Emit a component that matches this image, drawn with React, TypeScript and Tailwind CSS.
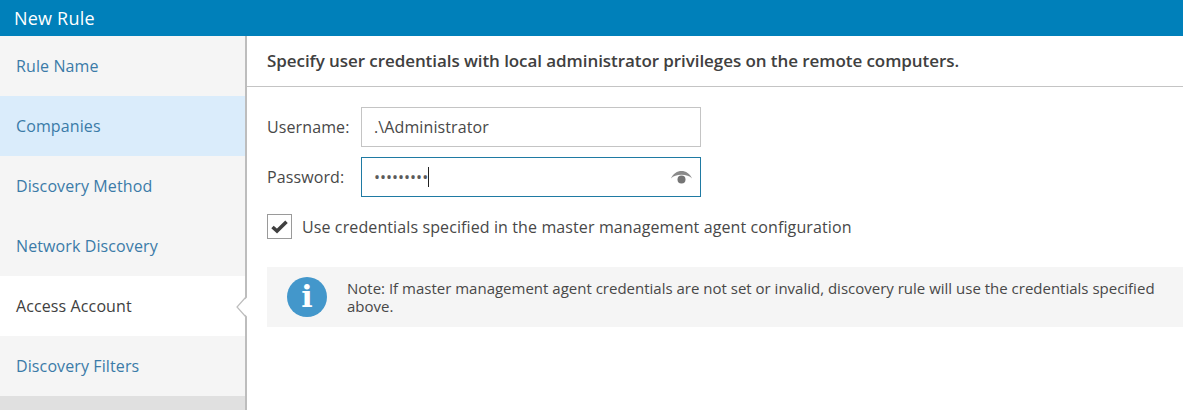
import React from "react";

const steps = [
  { label: "Rule Name", cls: "bg-[#f5f5f5] text-[#3b7ba8]" },
  { label: "Companies", cls: "bg-[#daecfb] text-[#3b7ba8]" },
  { label: "Discovery Method", cls: "bg-[#f5f5f5] text-[#3b7ba8]" },
  { label: "Network Discovery", cls: "bg-[#f5f5f5] text-[#3b7ba8]" },
  { label: "Access Account", cls: "bg-white text-[#404040]", active: true },
  { label: "Discovery Filters", cls: "bg-[#f5f5f5] text-[#3b7ba8]" },
];

const App = () => {
  return (
    <div className="h-[410px] w-[1183px] overflow-hidden bg-white font-['Open_Sans',sans-serif] text-[16px] tracking-[0.11px] text-[#484848]">
      {/* Title bar */}
      <div className="flex h-[36px] items-center bg-[#0080ba] pl-[14px] text-[18px] tracking-[0.2px] text-white">New Rule</div>

      <div className="flex h-[374px]">
        {/* Steps */}
        <div className="flex w-[247px] shrink-0 flex-col border-r-2 border-[#bdbdbd] bg-[#e0e0e0]">
          {steps.map((s) => (
            <div key={s.label} className={`relative flex h-[60px] shrink-0 items-center pl-[16px] ${s.cls}`}>
              {s.label}
              {s.active && (
                <svg className="absolute right-[-2px] top-[21px]" width="11" height="20" viewBox="0 0 11 20">
                  <path d="M11 0.5 L1 10 L11 19.5 Z" fill="#ffffff" />
                  <path d="M9.5 0.5 L1 10 L9.5 19.5" fill="none" stroke="#bdbdbd" strokeWidth="1.2" />
                </svg>
              )}
            </div>
          ))}
        </div>

        {/* Content */}
        <div className="min-w-0 flex-1">
          <div className="flex h-[51px] items-center border-b border-[#c4c4c4] pb-[1px] pl-[20px] text-[17px] font-semibold tracking-[-0.07px] text-[#404040]">
            Specify user credentials with local administrator privileges on the remote computers.
          </div>

          <div className="pl-[20px] pt-[20px]">
            <div className="flex items-center">
              <label className="w-[94px]">Username:</label>
              <div className="flex h-[40px] w-[340px] items-center border border-[#c4c4c4] pl-[12px]">.\Administrator</div>
            </div>
            <div className="mt-[10px] flex items-center">
              <label className="w-[94px]">Password:</label>
              <div className="flex h-[40px] w-[340px] items-center border border-[#1f7aa3] pl-[12px]">
                <span className="tracking-normal text-[#5a5a5a]">•••••••••</span>
                <span className="h-[20px] w-[1px] bg-[#222222]" />
                <svg className="ml-auto mr-[7px]" width="23" height="15" viewBox="0 0 23 15">
                  <path d="M1 8.5 C5 -1.5 18 -1.5 22 8.5 C18 3.5 5 3.5 1 8.5 Z" fill="#8a8a8a" />
                  <circle cx="11.5" cy="9.5" r="4" fill="#757575" />
                </svg>
              </div>
            </div>
            <div className="mt-[17px] flex items-center">
              <div className="flex h-[25px] w-[25px] items-center justify-center border border-[#9a9a9a] bg-white">
                <svg width="17" height="14" viewBox="0 0 17 14">
                  <path d="M1.5 7 L6 11 L15.5 1.8" fill="none" stroke="#404040" strokeWidth="3.6" />
                </svg>
              </div>
              <span className="ml-[10px]">Use credentials specified in the master management agent configuration</span>
            </div>
            <div className="mt-[28px] flex h-[60px] items-center bg-[#f5f5f5] pl-[20px] pr-[20px]">
              <div className="flex h-[40px] w-[40px] shrink-0 items-center justify-center rounded-full bg-[#4397cb] font-['DejaVu_Serif',serif] text-[30px] font-bold leading-none text-white">
                i
              </div>
              <p className="ml-[20px] text-[15px] leading-[18px] tracking-normal">
                Note: If master management agent credentials are not set or invalid, discovery rule will use the credentials specified above.
              </p>
            </div>
          </div>
        </div>
      </div>
    </div>
  );
};

export default App;
